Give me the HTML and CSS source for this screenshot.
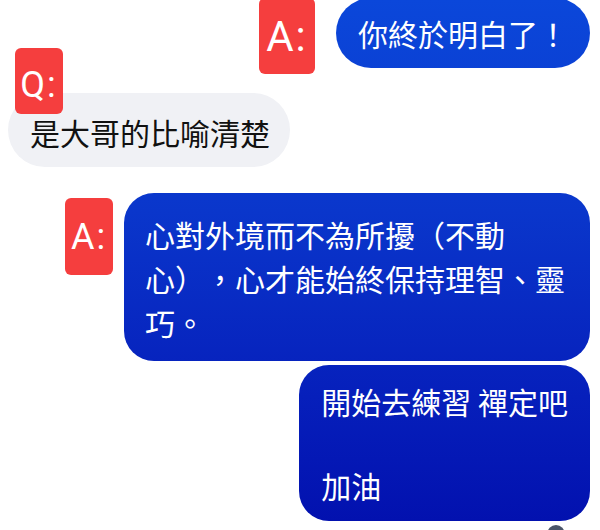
FILE: index.html
```html
<!DOCTYPE html>
<html lang="zh-Hant">
<head>
  <meta charset="UTF-8" />
  <meta name="viewport" content="width=device-width, initial-scale=1.0"/>
  <title>對話</title>
  <link rel="stylesheet" href="styles.css">
</head>
<body>

<div class="chat">

  <!-- 回覆 1 -->
  <div class="row out first">
    <div class="badge big">A:</div>
    <div class="bubble blue pill">你終於明白了！</div>
  </div>

  <!-- 提問 -->
  <div class="row in second">
    <div class="badge sticker">Q:</div>
    <div class="bubble gray pill">是大哥的比喻清楚</div>
  </div>

  <!-- 回覆 2 -->
  <div class="row out third">
    <div class="badge mid">A:</div>
    <div class="bubble blue box">心對外境而不為所擾（不動<br>心），心才能始終保持理智、靈<br>巧。</div>
  </div>

  <!-- 回覆 3 -->
  <div class="row out fourth">
    <div class="bubble blue box last">開始去練習 禪定吧<br><br>加油</div>
  </div>

  <div class="row out seen">
    <div class="avatar"></div>
  </div>

</div>

</body>
</html>
```

FILE: styles.css
```css
body {
  margin: 0;
  background: #fff;
  font-family: "Noto Sans CJK TC", "Noto Sans", sans-serif;
  overflow: hidden;
}
.chat {
  padding: 0 10px 0 8px;
  margin-top: -2px;
}
.row {
  display: flex;
  align-items: flex-start;
  position: relative;
}
.row.out {
  justify-content: flex-end;
}
.row.in {
  justify-content: flex-start;
}
.second {
  margin-top: 19px;
}
.third {
  margin-top: 26px;
}
.fourth {
  margin-top: 4px;
}
.seen {
  margin-top: 4px;
  padding-right: 25px;
}

.bubble {
  font-size: 30px;
  line-height: 42px;
  white-space: nowrap;
  text-spacing-trim: space-all;
}
.blue {
  color: #fff;
  background: linear-gradient(180deg, #0b47da 0%, #0a36cb 40%, #061fbb 75%, #0210ae 100%);
  background-attachment: fixed;
}
.gray {
  color: #111;
  background: #f0f1f5;
}
.pill {
  height: 70px;
  line-height: 70px;
  border-radius: 35px;
  padding: 0 22px;
}
.gray.pill {
  height: 74px;
  line-height: 78px;
  border-radius: 37px;
  padding: 0 20px 0 22px;
}
.box {
  border-radius: 30px;
  padding: 19px 25px 17px 21px;
  line-height: 44px;
}
.box.last {
  padding: 15px 22px 15px 22px;
  line-height: 42px;
}

.badge {
  background: #f53e3e;
  color: #fff;
  font-family: Roboto, "Liberation Sans", sans-serif;
  border-radius: 6px;
  display: flex;
  align-items: center;
  justify-content: center;
  letter-spacing: 2px;
}
.badge.big {
  width: 56px;
  height: 76px;
  margin-right: 21px;
  font-size: 42px;
}
.badge.mid {
  width: 48px;
  height: 77px;
  margin-top: 5px;
  margin-right: 11px;
  font-size: 36px;
}
.badge.sticker {
  position: absolute;
  left: 7px;
  top: -45px;
  width: 48px;
  height: 66px;
  font-size: 36px;
  padding-top: 8px;
  box-sizing: border-box;
  z-index: 1;
}

.avatar {
  width: 18px;
  height: 18px;
  border-radius: 50%;
  background: #4a5568;
}
```
